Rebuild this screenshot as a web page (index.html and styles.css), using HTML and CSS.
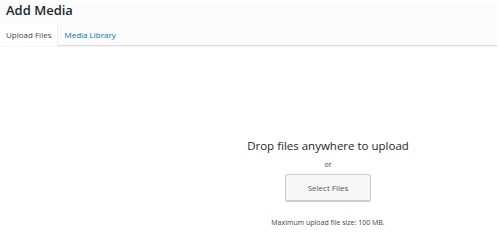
FILE: index.html
```html
<!DOCTYPE html>
<html lang="en">
<head>
    <meta charset="UTF-8">
    <title>Add Media</title>
    <link rel="stylesheet" href="styles.css">
</head>
<body>
    <div class="frame-top">
        <h1 class="frame-title">Add Media</h1>
        <div class="tabs">
            <a class="tab active">Upload Files</a>
            <a class="tab">Media Library</a>
        </div>
    </div>

    <div class="uploader">
        <div class="uploader-inner">
            <h2 class="upload-instructions">Drop files anywhere to upload</h2>
            <p class="upload-or">or</p>
            <button class="browser">Select Files</button>
            <p class="max-upload">Maximum upload file size: 100 MB.</p>
        </div>
    </div>
</body>
</html>
```

FILE: styles.css
```css
body {
    margin: 0;
    font-family: "Open Sans", "Noto Sans", sans-serif;
    color: #444;
    background: #fff;
}
.frame-top {
    margin: 2px 3px 0 0;
    background: #fcfcfc;
    border-bottom: 1px solid #ddd;
    box-shadow: 0 1px 1px rgba(0, 0, 0, 0.04);
}
.frame-title {
    margin: 0;
    padding: 0 6px;
    font-size: 13px;
    font-weight: 600;
    line-height: 17px;
    color: #23282d;
}
.tabs {
    display: flex;
    margin-top: 5px;
}
.tab {
    padding: 0 6px;
    font-size: 8px;
    line-height: 21px;
    color: #0073aa;
}
.tab.active {
    background: #fff;
    color: #444;
    border-right: 1px solid #eee;
    margin-bottom: -1px;
    padding-bottom: 1px;
}
.uploader {
    padding-left: 156px;
}
.uploader-inner {
    display: flex;
    flex-direction: column;
    align-items: center;
    padding-top: 92px;
}
.upload-instructions {
    margin: 0;
    font-size: 11.5px;
    font-weight: 400;
    line-height: 16px;
    color: #23282d;
}
.upload-or {
    margin: 6px 0 0;
    font-size: 7px;
    line-height: 10px;
}
.browser {
    margin-top: 4px;
    width: 86px;
    height: 27px;
    font-family: inherit;
    font-size: 8px;
    color: #555;
    background: #f7f7f7;
    border: 1px solid #ccc;
    border-radius: 2px;
    box-shadow: 0 1px 0 #ccc;
}
.max-upload {
    margin: 17px 0 0;
    font-size: 7px;
    line-height: 10px;
}
```
